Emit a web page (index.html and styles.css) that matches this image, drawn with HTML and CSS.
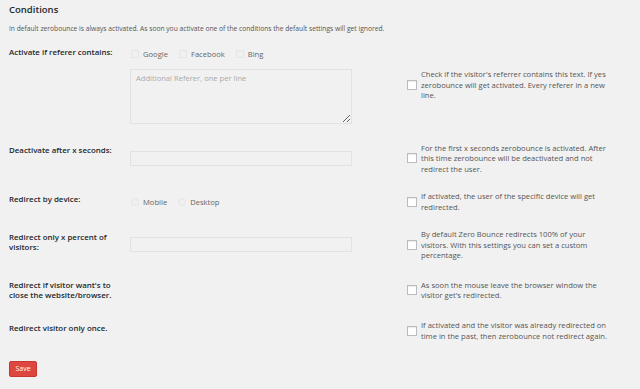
FILE: index.html
```html
<!DOCTYPE html>
<html lang="en">
  <head>
    <meta charset="UTF-8" />
    <title>Conditions</title>
    <link rel="stylesheet" href="styles.css">
  </head>
  <body>
    <div class="wrap">
      <h2 class="title">Conditions</h2>
      <p class="intro">In default zerobounce is always activated. As soon you activate one of the conditions the default settings will get ignored.</p>

      <div class="form-table">
        <!-- referer -->
        <div class="row">
          <div class="row-label">Activate if referer contains:</div>
          <div class="row-field">
            <div class="choices">
              <label class="choice"><input type="checkbox" class="soft-check" />Google</label>
              <label class="choice"><input type="checkbox" class="soft-check" />Facebook</label>
              <label class="choice"><input type="checkbox" class="soft-check" />Bing</label>
            </div>
            <textarea class="textarea" placeholder="Additional Referer, one per line"></textarea>
          </div>
          <label class="row-toggle">
            <input type="checkbox" class="check" />
            <span>Check if the visitor's referrer contains this text. If yes zerobounce will get activated. Every referer in a new line.</span>
          </label>
        </div>

        <!-- seconds -->
        <div class="row">
          <div class="row-label">Deactivate after x seconds:</div>
          <div class="row-field">
            <input type="text" class="input" />
          </div>
          <label class="row-toggle">
            <input type="checkbox" class="check" />
            <span>For the first x seconds zerobounce is activated. After this time zerobounce will be deactivated and not redirect the user.</span>
          </label>
        </div>

        <!-- device -->
        <div class="row">
          <div class="row-label">Redirect by device:</div>
          <div class="row-field">
            <div class="choices">
              <label class="choice"><input type="radio" name="device" class="soft-radio" />Mobile</label>
              <label class="choice"><input type="radio" name="device" class="soft-radio" />Desktop</label>
            </div>
          </div>
          <label class="row-toggle">
            <input type="checkbox" class="check" />
            <span>If activated, the user of the specific device will get redirected.</span>
          </label>
        </div>

        <!-- percent -->
        <div class="row">
          <div class="row-label">Redirect only x percent of visitors:</div>
          <div class="row-field">
            <input type="text" class="input" />
          </div>
          <label class="row-toggle">
            <input type="checkbox" class="check" />
            <span>By default Zero Bounce redirects 100% of your visitors. With this settings you can set a custom percentage.</span>
          </label>
        </div>

        <!-- exit intent -->
        <div class="row">
          <div class="row-label">Redirect if visitor want's to close the website/browser.</div>
          <div class="row-field"></div>
          <label class="row-toggle">
            <input type="checkbox" class="check" />
            <span>As soon the mouse leave the browser window the visitor get's redirected.</span>
          </label>
        </div>

        <!-- once -->
        <div class="row">
          <div class="row-label">Redirect visitor only once.</div>
          <div class="row-field"></div>
          <label class="row-toggle">
            <input type="checkbox" class="check" />
            <span>If activated and the visitor was already redirected on time in the past, then zerobounce not redirect again.</span>
          </label>
        </div>
      </div>

      <button type="button" class="button">Save</button>
    </div>
  </body>
</html>
```

FILE: styles.css
```css
body {
  margin: 0;
  background-color: #f1f1f1; /* admin background */
  font-family: "Open Sans", "Liberation Sans", sans-serif;
  color: #444;
}
.wrap {
  padding: 3px 9px 0;
}
.title {
  margin: 0;
  font-size: 9.5px;
  line-height: 14px;
  font-weight: 600;
  color: #23282d;
}
.intro {
  margin: 7px 0 2px;
  font-size: 6.7px;
  line-height: 10px;
  color: #555;
}
.row {
  display: grid;
  grid-template-columns: 121px 222px 1fr;
  align-items: center;
}
.row-label {
  align-self: start;
  padding: 11px 6px 11px 0;
  font-size: 7.9px;
  line-height: 10.3px;
  font-weight: 600;
  color: #23282d;
}
.row-field {
  padding: 8.5px 0;
}
.choices {
  display: flex;
  align-items: center;
  height: 18px;
  font-size: 7.6px;
  color: #666;
}
.choice {
  display: flex;
  align-items: center;
  margin-right: 10px;
}
.soft-check,
.soft-radio {
  appearance: none;
  width: 8px;
  height: 8px;
  margin: 0 4px 0 1px;
  border: 1px solid #e6e6e6;
  background-color: #f0f0f0;
}
.soft-radio {
  border-radius: 50%;
}
.textarea {
  display: block;
  box-sizing: border-box;
  width: 222px;
  height: 55px;
  margin: 6px 0 2px;
  padding: 3px 5px;
  border: 1px solid #e2e2e2;
  background-color: #f1f1f1;
  font-family: inherit;
  font-size: 7.6px;
  color: #555;
}
.textarea::placeholder {
  color: #aaa;
}
.input {
  display: block;
  box-sizing: border-box;
  width: 222px;
  height: 15px;
  margin: 0;
  border: 1px solid #e2e2e2;
  background-color: #f1f1f1;
}
.row-toggle {
  display: flex;
  align-items: center;
  width: 204px;
  margin-left: 55px;
  padding: 8.5px 0;
  font-size: 7.6px;
  line-height: 10.5px;
  color: #555;
}
.check {
  appearance: none;
  flex: none;
  width: 10px;
  height: 10px;
  margin: 0 4px 0 0;
  border: 1px solid #b8bcc0;
  background-color: #fff;
  box-sizing: border-box;
  box-shadow: inset 0 1px 1px rgba(0, 0, 0, 0.08);
}
.button {
  display: block;
  margin-top: 11px;
  width: 28px;
  height: 16px;
  padding: 0;
  border: 1px solid #c9352f;
  border-radius: 2px;
  background-color: #de4640; /* save button */
  color: #fff;
  font-family: inherit;
  font-size: 7px;
  cursor: pointer;
}
```
